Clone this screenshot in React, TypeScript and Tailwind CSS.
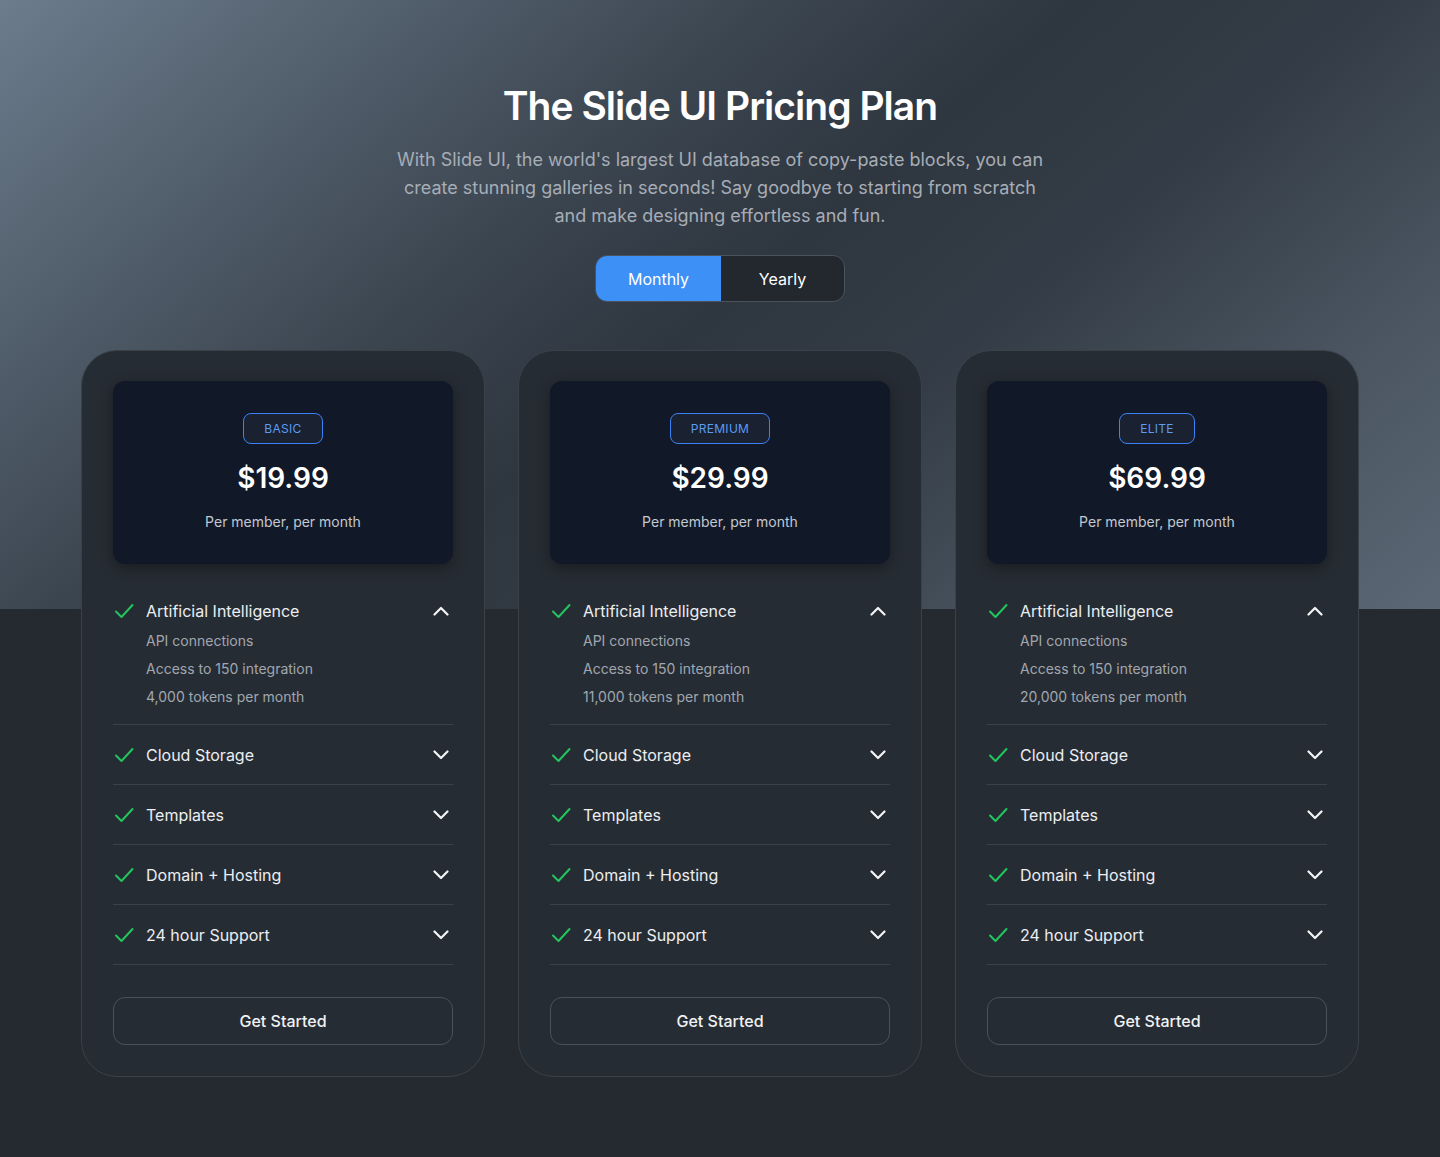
import { useState } from 'react'

const plans = [
  { name: 'BASIC', price: '$19.99', tokens: '4,000 tokens per month' },
  { name: 'PREMIUM', price: '$29.99', tokens: '11,000 tokens per month' },
  { name: 'ELITE', price: '$69.99', tokens: '20,000 tokens per month' },
]

const features = ['Cloud Storage', 'Templates', 'Domain + Hosting', '24 hour Support']

function Check() {
  return (
    <svg width="20" height="16" viewBox="0 0 20 16" fill="none" className="shrink-0">
      <path d="M2 8.5 7.5 14 18.5 2" stroke="#22c55e" strokeWidth="2" strokeLinecap="round" strokeLinejoin="round" />
    </svg>
  )
}

function Chevron({ up }: { up?: boolean }) {
  return (
    <svg width="16" height="10" viewBox="0 0 16 10" fill="none" className="shrink-0">
      <path
        d={up ? 'M1.5 8.5 8 2l6.5 6.5' : 'M1.5 1.5 8 8l6.5-6.5'}
        stroke="#f3f4f6"
        strokeWidth="2.2"
        strokeLinecap="round"
        strokeLinejoin="round"
      />
    </svg>
  )
}

function PlanCard({ plan }: { plan: (typeof plans)[number] }) {
  return (
    <div className="w-[404px] rounded-[36px] border border-[#3a4149] bg-[#262c33] px-[31px] pb-[31px] pt-[30px]">
      <div className="flex h-[183px] flex-col items-center rounded-xl bg-[#111827] pt-8 shadow-[0_4px_14px_rgba(0,0,0,0.35)]">
        <span className="flex h-[31px] items-center rounded-lg border border-[#3b82f6] bg-[#1a2130] px-5 text-xs tracking-wide text-[#5b9cf5]">
          {plan.name}
        </span>
        <div className="mt-4 text-[28px] font-semibold leading-9 text-white">{plan.price}</div>
        <div className="mt-4 text-sm leading-5 text-[#c3c8cf]">Per member, per month</div>
      </div>

      <div className="mt-[17px]">
        <div className="border-b border-[#3a4149] pb-[13px] pt-[18px]">
          <div className="flex h-6 items-center justify-between pl-[1px] pr-1">
            <div className="flex items-center gap-[12px]">
              <Check />
              <span className="text-base text-[#eceef1]">Artificial Intelligence</span>
            </div>
            <Chevron up />
          </div>
          <ul className="mt-1 pl-[33px] text-sm leading-7 text-[#a1a7b0]">
            <li>API connections</li>
            <li>Access to 150 integration</li>
            <li>{plan.tokens}</li>
          </ul>
        </div>
        {features.map((f) => (
          <div key={f} className="flex h-[60px] items-center justify-between border-b border-[#3a4149] pl-[1px] pr-1">
            <div className="flex items-center gap-[12px]">
              <Check />
              <span className="text-base text-[#eceef1]">{f}</span>
            </div>
            <Chevron />
          </div>
        ))}
      </div>

      <button className="mt-8 h-12 w-full rounded-xl border border-[#49515b] text-base font-medium text-[#f1f2f4]">
        Get Started
      </button>
    </div>
  )
}

export default function App() {
  const [period, setPeriod] = useState<'monthly' | 'yearly'>('monthly')

  return (
    <div className="min-h-screen bg-[#252a31] font-['Inter',sans-serif]">
      <section className="flex h-[609px] flex-col items-center bg-[linear-gradient(140deg,#6c7c8d_0%,#53606d_18%,#3b4550_36%,#2e363f_50%,#343d47_64%,#4a5561_82%,#5b6774_100%)] pt-[82px]">
        <h1 className="text-[39px] font-semibold leading-[48px] tracking-tight text-white">The Slide UI Pricing Plan</h1>
        <p className="mt-4 max-w-[660px] text-center text-lg leading-7 text-[#a7adb6]">
          With Slide UI, the world's largest UI database of copy-paste blocks, you can create stunning galleries in
          seconds! Say goodbye to starting from scratch and make designing effortless and fun.
        </p>
        <div className="mt-[25px] flex h-[47px] overflow-hidden rounded-xl border border-[#4a525c] bg-[#23282e]">
          <button
            onClick={() => setPeriod('monthly')}
            className={
              period === 'monthly'
                ? 'w-[125px] bg-[#3d91f6] text-base text-white'
                : 'w-[125px] text-base text-white'
            }
          >
            Monthly
          </button>
          <button
            onClick={() => setPeriod('yearly')}
            className={
              period === 'yearly'
                ? 'w-[123px] bg-[#3d91f6] text-base text-white'
                : 'w-[123px] text-base text-white'
            }
          >
            Yearly
          </button>
        </div>
      </section>

      <div className="-mt-[259px] flex justify-center gap-[33px] pb-[81px]">
        {plans.map((p) => (
          <PlanCard key={p.name} plan={p} />
        ))}
      </div>
    </div>
  )
}
